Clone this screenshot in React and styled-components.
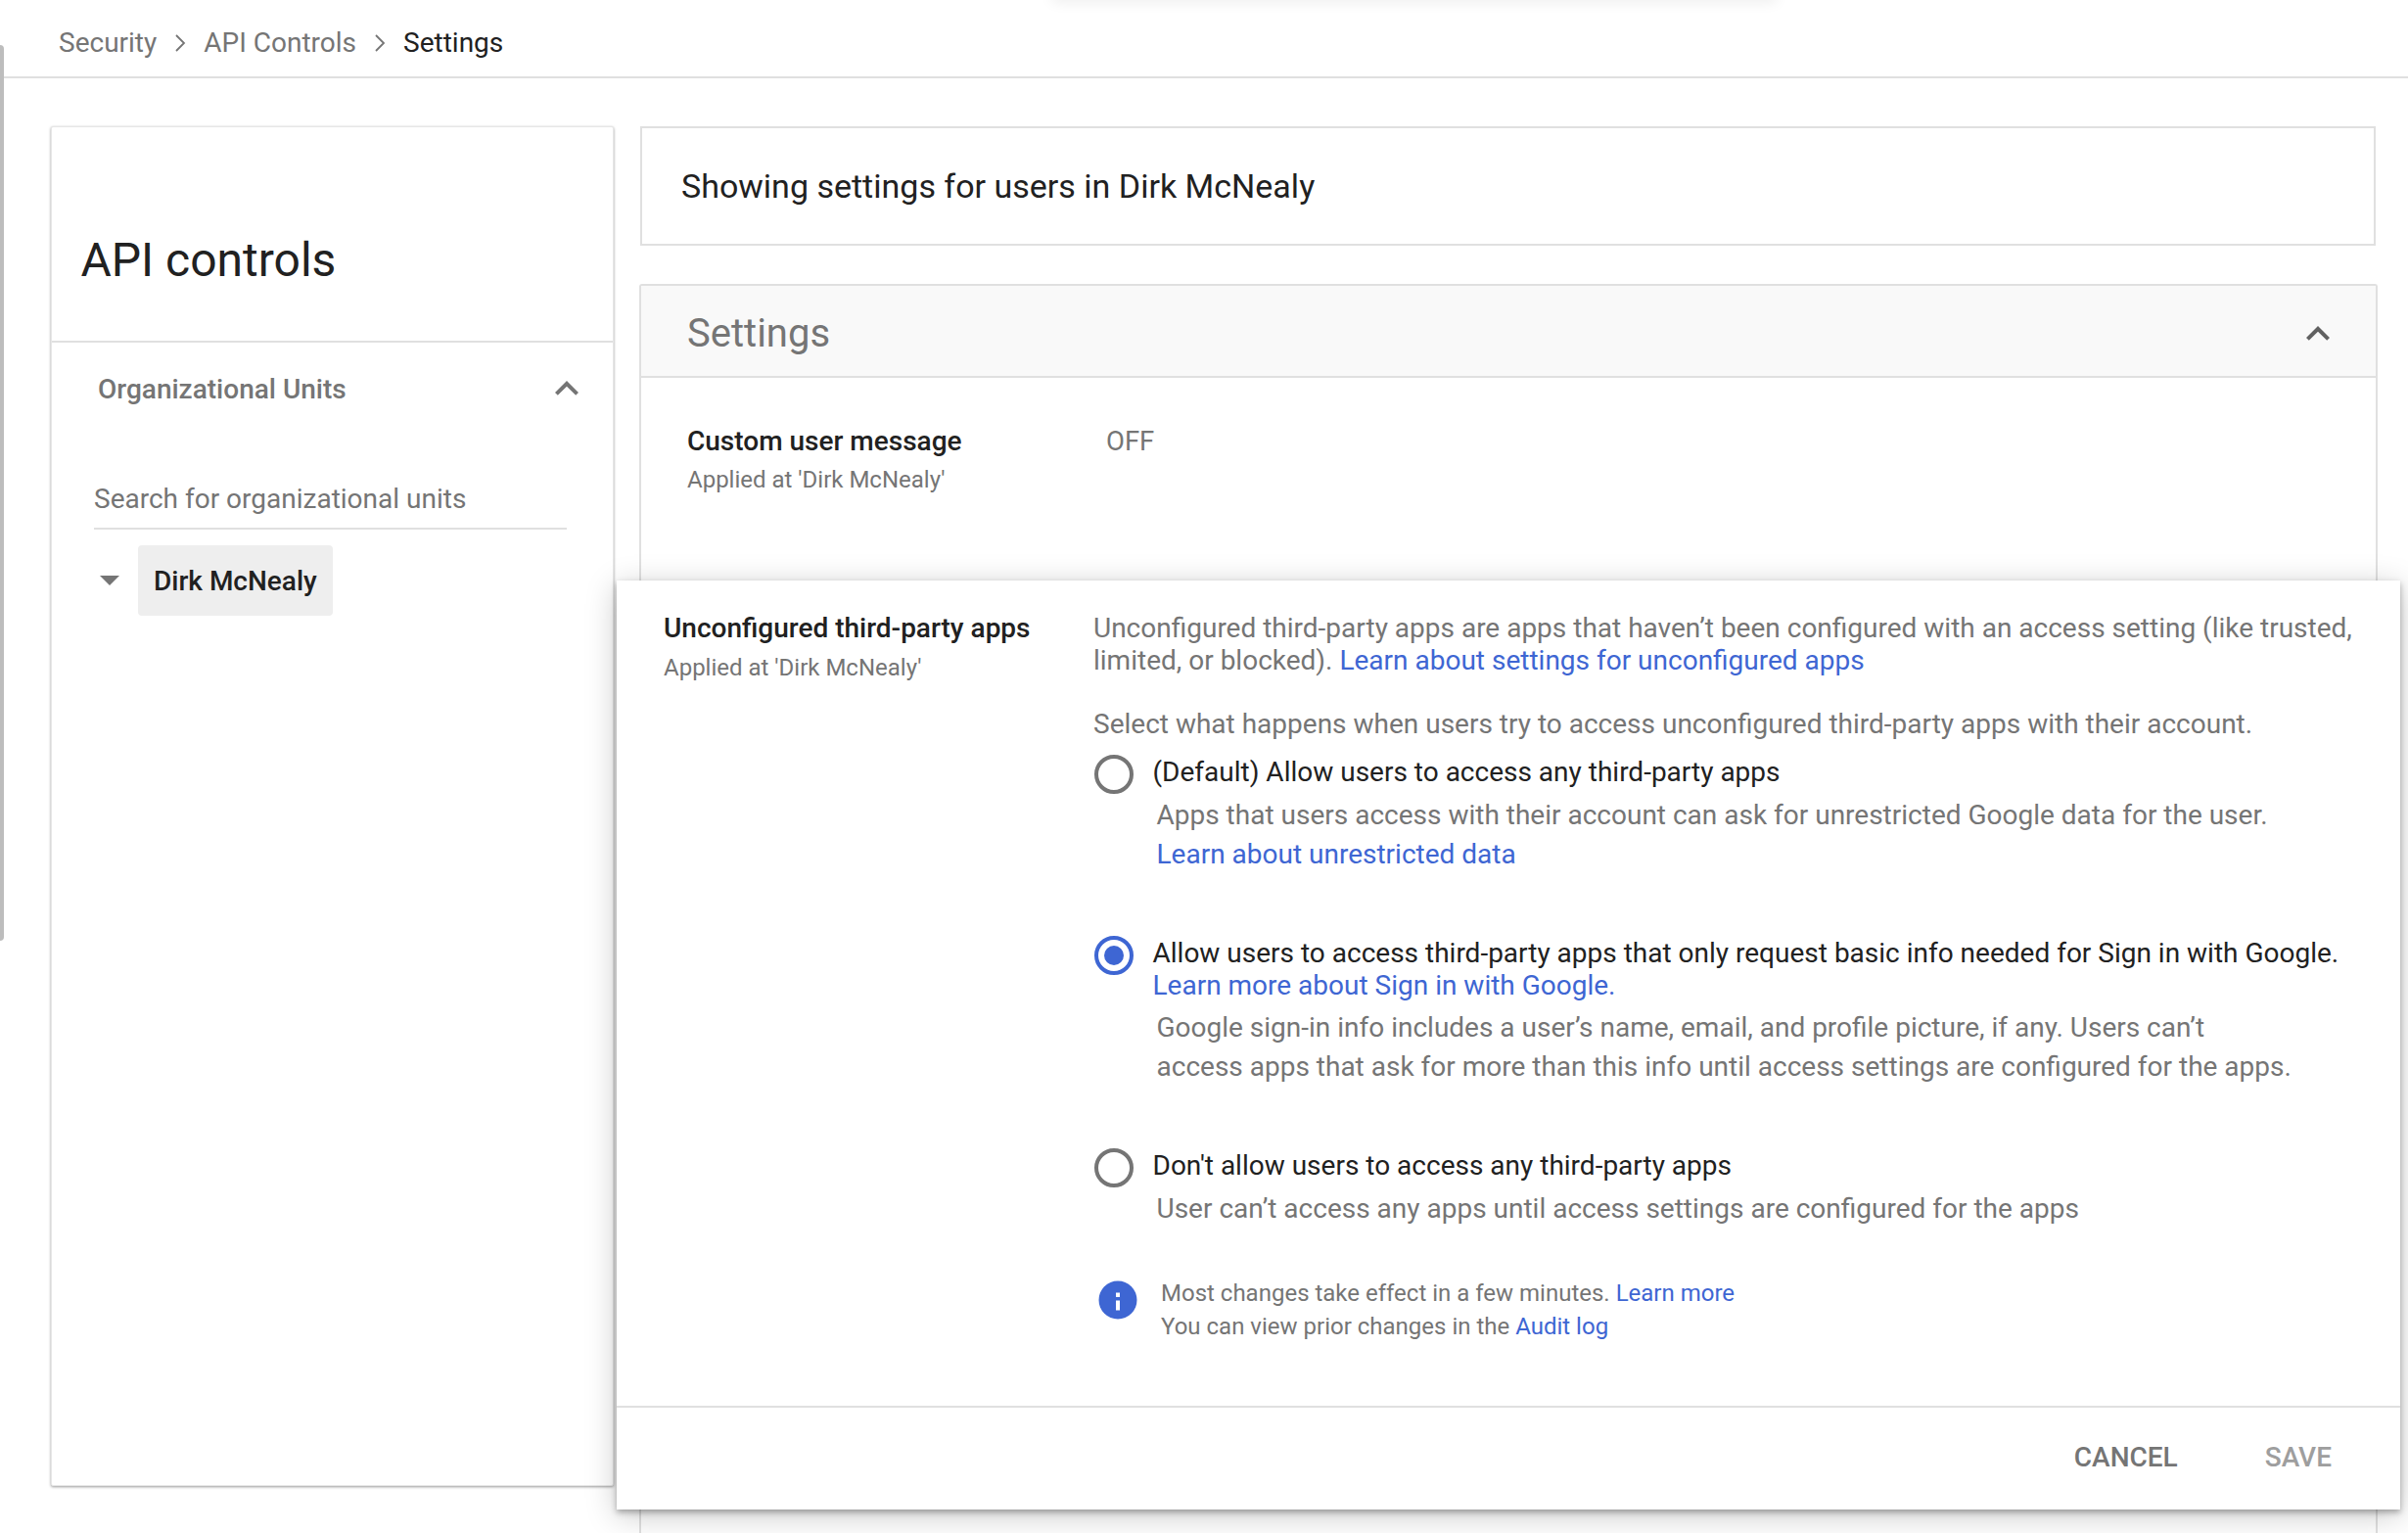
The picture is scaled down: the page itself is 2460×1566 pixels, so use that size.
import React from 'react'
import styled, { createGlobalStyle } from 'styled-components'

const GlobalStyle = createGlobalStyle`
    html, body {
        margin: 0;
        padding: 0;
        background: #fff;
        font-family: Roboto, "Liberation Sans", sans-serif;
    }
    * { box-sizing: border-box; }
`

function ExpandLess({ color = '#757575' }) {
    return (
        <svg width="48" height="48" viewBox="0 0 24 24">
            <path fill={color} d="M12 8l-6 6 1.41 1.41L12 10.83l4.59 4.58L18 14z" />
        </svg>
    )
}

function CrumbArrow() {
    return (
        <svg width="12" height="20" viewBox="0 0 12 20">
            <path d="M2 2l8 8-8 8" fill="none" stroke="#757575" strokeWidth="1.8" />
        </svg>
    )
}

function InfoIcon() {
    return (
        <svg width="40" height="40" viewBox="0 0 40 40">
            <circle cx="20" cy="20" r="19.5" fill="#3e66d3" />
            <rect x="18" y="12.5" width="4" height="4.5" fill="#fff" />
            <rect x="18" y="20.5" width="4" height="10" fill="#fff" />
        </svg>
    )
}

function App() {
    return (
        <Page>
            <GlobalStyle />
            <SideGrip />
            <TopGlow />
            <Breadcrumbs>
                <Crumb>Security</Crumb>
                <CrumbArrow />
                <Crumb>API Controls</Crumb>
                <CrumbArrow />
                <Crumb $current>Settings</Crumb>
            </Breadcrumbs>
            <Content>
                <Sidebar>
                    <SidebarTitle>API controls</SidebarTitle>
                    <SectionHead>
                        <span>Organizational Units</span>
                        <ExpandLess />
                    </SectionHead>
                    <SearchField>Search for organizational units</SearchField>
                    <TreeRow>
                        <TreeCaret />
                        <TreeChip>Dirk McNealy</TreeChip>
                    </TreeRow>
                </Sidebar>
                <Main>
                    <ScopeBox>Showing settings for users in Dirk McNealy</ScopeBox>
                    <SettingsCard>
                        <CardHeader>
                            <span>Settings</span>
                            <ExpandLess color="#616161" />
                        </CardHeader>
                        <SettingRow>
                            <div>
                                <SettingName>Custom user message</SettingName>
                                <Applied>Applied at 'Dirk McNealy'</Applied>
                            </div>
                            <SettingValue>OFF</SettingValue>
                        </SettingRow>
                    </SettingsCard>
                </Main>
            </Content>
            <EditPanel>
                <EditBody>
                    <div>
                        <SettingName>Unconfigured third-party apps</SettingName>
                        <Applied>Applied at 'Dirk McNealy'</Applied>
                    </div>
                    <div>
                        <Intro>
                            Unconfigured third-party apps are apps that haven’t been configured with an access setting (like trusted, limited, or blocked). <Link>Learn about settings for unconfigured apps</Link>
                        </Intro>
                        <Prompt>Select what happens when users try to access unconfigured third-party apps with their account.</Prompt>
                        <Option>
                            <Radio />
                            <div>
                                <OptionLabel>(Default) Allow users to access any third-party apps</OptionLabel>
                                <OptionHelp>
                                    Apps that users access with their account can ask for unrestricted Google data for the user.<br />
                                    <Link>Learn about unrestricted data</Link>
                                </OptionHelp>
                            </div>
                        </Option>
                        <Option $spaced>
                            <Radio $checked />
                            <div>
                                <OptionLabel>
                                    Allow users to access third-party apps that only request basic info needed for Sign in with Google.<br />
                                    <Link>Learn more about Sign in with Google.</Link>
                                </OptionLabel>
                                <OptionHelp>
                                    Google sign-in info includes a user’s name, email, and profile picture, if any. Users can’t<br />
                                    access apps that ask for more than this info until access settings are configured for the apps.
                                </OptionHelp>
                            </div>
                        </Option>
                        <Option $spaced>
                            <Radio />
                            <div>
                                <OptionLabel>Don't allow users to access any third-party apps</OptionLabel>
                                <OptionHelp>User can’t access any apps until access settings are configured for the apps</OptionHelp>
                            </div>
                        </Option>
                        <Notice>
                            <NoticeIcon>
                                <InfoIcon />
                            </NoticeIcon>
                            <NoticeText>
                                Most changes take effect in a few minutes. <Link>Learn more</Link><br />
                                You can view prior changes in the <Link>Audit log</Link>
                            </NoticeText>
                        </Notice>
                    </div>
                </EditBody>
                <EditFooter>
                    <FooterButton>Cancel</FooterButton>
                    <FooterButton $disabled>Save</FooterButton>
                </EditFooter>
            </EditPanel>
        </Page>
    )
}

const Page = styled.div`
    position: relative;
    width: 2460px;
    height: 1566px;
    overflow: hidden;
    background: #fff;
    display: flex;
    flex-direction: column;
`
const SideGrip = styled.div`
    position: absolute;
    left: 0;
    top: 46px;
    width: 4px;
    height: 915px;
    background: #bdbdbd;
    border-radius: 0 5px 5px 0;
`
const TopGlow = styled.div`
    position: absolute;
    left: 1075px;
    top: -12px;
    width: 740px;
    height: 12px;
    box-shadow: 0 2px 14px rgba(0, 0, 0, 0.08);
`
const Breadcrumbs = styled.div`
    height: 80px;
    flex: none;
    display: flex;
    align-items: center;
    gap: 18px;
    padding: 9px 0 0 60px;
    border-bottom: 2px solid #e0e0e0;
`
const Crumb = styled.span`
    font-size: 28px;
    color: ${props => (props.$current ? '#212121' : '#757575')};
`
const Content = styled.div`
    flex: 1;
    min-height: 0;
    display: flex;
    gap: 26px;
    padding: 49px 31px 0 52px;
`
const Sidebar = styled.div`
    width: 575px;
    height: 1389px;
    flex: none;
    background: #fff;
    border: 1px solid #e6e6e6;
    border-radius: 2px;
    box-shadow: 0 1px 3px rgba(0, 0, 0, 0.4);
`
const SidebarTitle = styled.h1`
    margin: 0;
    height: 220px;
    padding: 103px 0 0 29.5px;
    font-size: 48px;
    line-height: 66px;
    font-weight: 400;
    color: #212121;
    border-bottom: 2px solid #e0e0e0;
`
const SectionHead = styled.div`
    display: flex;
    align-items: center;
    justify-content: space-between;
    height: 94px;
    padding: 0 23px 0 47px;
    font-size: 28px;
    font-weight: 500;
    color: #757575;
`
const SearchField = styled.div`
    margin: 48px 47px 0 43px;
    height: 49px;
    font-size: 28px;
    line-height: 36px;
    color: #757575;
    border-bottom: 2px solid #e0e0e0;
`
const TreeRow = styled.div`
    display: flex;
    align-items: center;
    gap: 19px;
    margin: 16px 0 0 49px;
`
const TreeCaret = styled.div`
    width: 0;
    height: 0;
    border-left: 10px solid transparent;
    border-right: 10px solid transparent;
    border-top: 10px solid #757575;
`
const TreeChip = styled.div`
    height: 72px;
    padding: 0 16px;
    display: flex;
    align-items: center;
    background: #eee;
    border-radius: 4px;
    font-size: 28px;
    font-weight: 500;
    color: #212121;
`
const Main = styled.div`
    flex: 1;
    min-width: 0;
    display: flex;
    flex-direction: column;
`
const ScopeBox = styled.div`
    height: 122px;
    margin: 0 2px 0 1px;
    padding-left: 40px;
    display: flex;
    align-items: center;
    font-size: 34px;
    color: #212121;
    border: 2px solid #e0e0e0;
`
const SettingsCard = styled.div`
    flex: 1;
    margin-top: 39px;
    border: 2px solid #e0e0e0;
    border-bottom: none;
    border-radius: 3px 3px 0 0;
`
const CardHeader = styled.div`
    height: 94px;
    display: flex;
    align-items: center;
    justify-content: space-between;
    padding: 5px 35px 0 47px;
    background: #f9f9f9;
    border-bottom: 2px solid #e0e0e0;
    font-size: 40px;
    color: #757575;
`
const SettingRow = styled.div`
    display: grid;
    grid-template-columns: 428px 1fr;
    padding: 47.5px 47px 0;
`
const SettingName = styled.div`
    font-size: 28px;
    line-height: 34px;
    font-weight: 500;
    color: #212121;
`
const Applied = styled.div`
    margin-top: 5.5px;
    font-size: 24px;
    line-height: 34px;
    color: #757575;
`
const SettingValue = styled.div`
    font-size: 27.5px;
    line-height: 34px;
    color: #757575;
`
const EditPanel = styled.div`
    position: absolute;
    left: 630px;
    top: 593px;
    width: 1822px;
    height: 949px;
    display: flex;
    flex-direction: column;
    background: #fff;
    box-shadow: 0 3px 6px rgba(0, 0, 0, 0.3), 0 6px 30px rgba(0, 0, 0, 0.22);
`
const EditBody = styled.div`
    flex: 1;
    display: grid;
    grid-template-columns: 439px 1fr;
    padding: 32px 30px 0 48px;
`
const Intro = styled.div`
    font-size: 28px;
    line-height: 33px;
    color: #757575;
`
const Prompt = styled.div`
    margin-top: 32px;
    font-size: 28px;
    line-height: 33px;
    color: #757575;
`
const Link = styled.span`
    color: #3e66d3;
`
const Option = styled.div`
    display: grid;
    grid-template-columns: 60.5px 1fr;
    margin-top: ${props => (props.$spaced ? '64px' : '16px')};
`
const Radio = styled.div`
    width: 40px;
    height: 40px;
    margin: -1px 0 0 0.5px;
    border-radius: 50%;
    border: 4px solid ${props => (props.$checked ? '#3e66d3' : '#757575')};
    display: flex;
    align-items: center;
    justify-content: center;
    &::after {
        content: '';
        width: 20px;
        height: 20px;
        border-radius: 50%;
        background: ${props => (props.$checked ? '#3e66d3' : 'transparent')};
    }
`
const OptionLabel = styled.div`
    font-size: 28px;
    line-height: 33px;
    color: #212121;
`
const OptionHelp = styled.div`
    margin-top: 7.5px;
    padding-left: 4px;
    font-size: 28px;
    line-height: 40px;
    color: #757575;
`
const Notice = styled.div`
    display: flex;
    align-items: flex-start;
    gap: 24px;
    margin-top: 49px;
`
const NoticeIcon = styled.div`
    margin: 4px 0 0 5px;
    line-height: 0;
`
const NoticeText = styled.div`
    font-size: 24px;
    line-height: 34px;
    color: #757575;
`
const EditFooter = styled.div`
    height: 106px;
    flex: none;
    display: flex;
    align-items: center;
    justify-content: flex-end;
    gap: 89px;
    padding: 0 70px 3px 0;
    border-top: 2px solid #e0e0e0;
`
const FooterButton = styled.div`
    font-size: 28px;
    font-weight: 500;
    text-transform: uppercase;
    color: ${props => (props.$disabled ? '#9e9e9e' : '#757575')};
`

export default App
